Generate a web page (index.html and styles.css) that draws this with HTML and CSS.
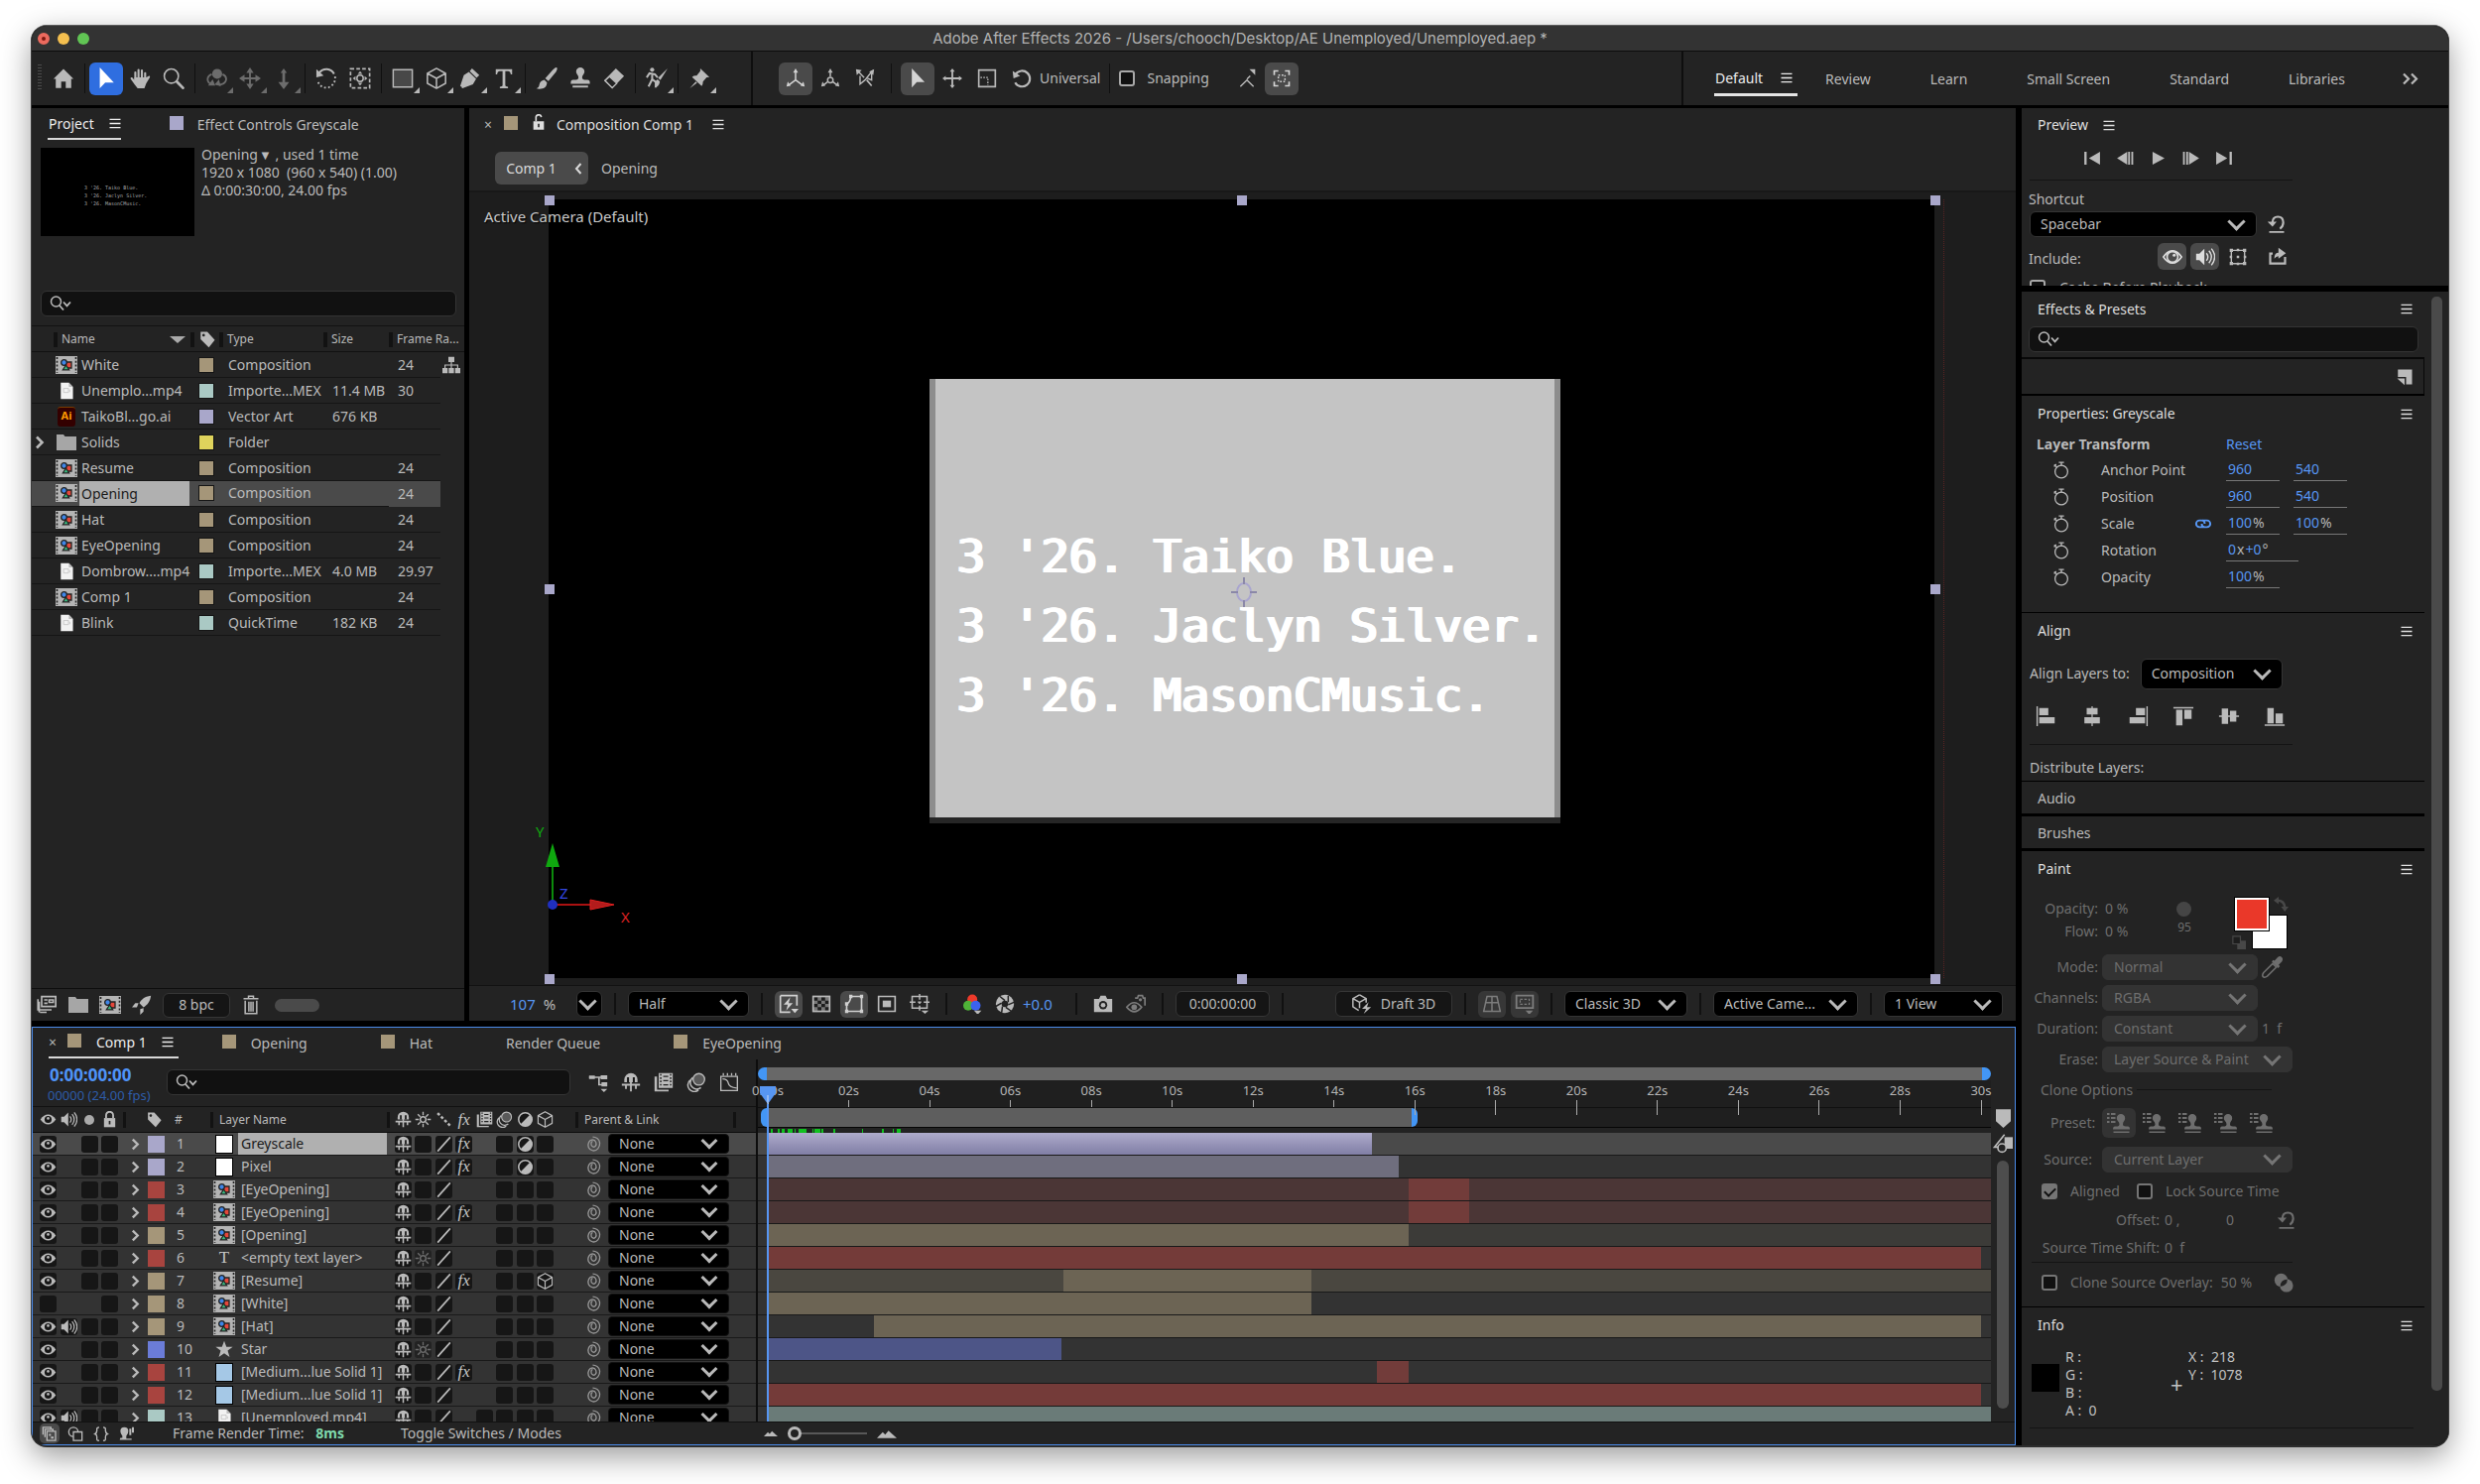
FILE: index.html
```html
<!DOCTYPE html>
<html lang="en">
<head>
<meta charset="utf-8">
<title>Adobe After Effects 2026</title>
<link rel="stylesheet" href="styles.css">
</head>
<body>
<svg class="sprite" aria-hidden="true">
  <symbol id="menu" viewBox="0 0 12 12"><path d="M0 1.5h12M0 6h12M0 10.5h12" stroke="currentColor" stroke-width="1.4"/></symbol>
  <symbol id="home" viewBox="0 0 24 24"><path d="M12 1.5 23 12.5h-2.5V22.5h-6v-7h-5v7h-6v-10H1z" fill="currentColor"/></symbol>
  <symbol id="arrow" viewBox="0 0 24 24"><path d="M5 0v23l6-6.5h9.5z" fill="currentColor"/></symbol>
  <symbol id="hand" viewBox="0 0 24 24"><path d="M7 14V5.5M10.5 12V2.8M14.2 12V3.2M17.8 13.5V6.2" stroke="currentColor" stroke-width="2.3" stroke-linecap="round" fill="none"/><path d="M6 11h13l2.500-1.500q2-.5 1.500 1.500l-4 6.500L17 23H9.500L6.500 19 1.800 12.500Q1.500 10.500 3.500 11L6 14z" fill="currentColor"/></symbol>
  <symbol id="loupe" viewBox="0 0 24 24"><circle cx="9.500" cy="9.500" r="7.800" fill="none" stroke="currentColor" stroke-width="1.700"/><path d="m15.500 15.500 6.800 7" stroke="currentColor" stroke-width="3" stroke-linecap="round"/></symbol>
  <symbol id="orbit" viewBox="0 0 24 24"><circle cx="13" cy="7" r="5.500" fill="currentColor"/><path d="M7 7.500C1 10 1 16 7 18.500M19 7.500c6 3 4.500 9-1 11-3 1-5 .5-7-.5" stroke="currentColor" stroke-width="2" fill="none"/><path d="m3 20 8 0-3-7zM15 13l-4 5 6 3z" fill="currentColor"/></symbol>
  <symbol id="pan" viewBox="0 0 24 24"><path d="M12 3v18M3 12h18" stroke="currentColor" stroke-width="2"/><path d="m12 0 4 6H8zM12 24l4-6H8zM0 12l6-4v8zM24 12l-6-4v8z" fill="currentColor"/></symbol>
  <symbol id="dolly" viewBox="0 0 24 24"><path d="M12 4v14" stroke="currentColor" stroke-width="3"/><path d="m12 1 3.500 5h-7zM12 24l6-8H6z" fill="currentColor"/></symbol>
  <symbol id="rotate" viewBox="0 0 24 24"><path d="M4 6C9 0 17 1 20.500 7" stroke="currentColor" stroke-width="2.200" fill="none"/><path d="M1 2v9l8-2z" fill="currentColor"/><path d="M21.500 10c1 5-2 10-7 12-5 1-10-1-12-7" stroke="currentColor" stroke-width="2" fill="none" stroke-dasharray="2 2.500"/></symbol>
  <symbol id="anchor" viewBox="0 0 24 24"><path d="M1.500 1.500h21v21h-21z" fill="none" stroke="currentColor" stroke-width="1.800" stroke-dasharray="4 2.400"/><circle cx="12" cy="12" r="3.500" fill="none" stroke="currentColor" stroke-width="1.600"/><path d="m12 4 2.500 3h-5zM12 20l2.500-3h-5zM4 12l3-2.500v5zM20 12l-3-2.500v5z" fill="currentColor"/></symbol>
  <symbol id="rect" viewBox="0 0 24 24"><path d="M1.500 2.500h21v19h-21z" fill="#484848" stroke="currentColor" stroke-width="1.600"/></symbol>
  <symbol id="cube" viewBox="0 0 24 24"><path d="m12 1 10 5.500v11L12 23 2 17.500v-11zM2 6.500l10 5.500 10-5.500M12 12v11" fill="none" stroke="currentColor" stroke-width="1.700" stroke-linejoin="round"/></symbol>
  <symbol id="pen" viewBox="0 0 24 24"><path d="M14 1 22 8.500l-3 3L11.500 4zM10.500 5l8 7.500-3.500 6L3.500 23 2.500 22l6-6.500a2 2 0 1 1 1 1L3.500 22 1 20.500l4-12z" fill="currentColor"/></symbol>
  <symbol id="type" viewBox="0 0 24 24"><path d="M3 2h18v5.500h-1.500Q19 4 16.500 4h-3v16q0 1.200 3 1.300V23h-9v-1.700q3-.1 3-1.300V4h-3Q5 4 4.500 7.500H3z" fill="currentColor"/></symbol>
  <symbol id="brush" viewBox="0 0 24 24"><path d="M23 0q1.500 1-.5 4.500L14 15l-3.500-3L19 2.500Q22-.5 23 0zM9.500 13.500l3 3Q12 23 6 23.500q-3 .5-5.500-.5 3-.5 3.500-4 .5-4.500 5.500-5.500z" fill="currentColor"/></symbol>
  <symbol id="stamp" viewBox="0 0 24 24"><path d="M12 0a4.600 4.600 0 0 1 4.600 4.600c0 2.500-2.600 4-2.600 6.400 0 1.500 1 2.500 3 2.500h3q2.500 0 2.500 3V18h-21v-1.500q0-3 2.500-3h3q3 0 3-2.500c0-2.400-2.600-3.900-2.600-6.400A4.600 4.600 0 0 1 12 0zM3.500 20h17v2h-17z" fill="currentColor"/></symbol>
  <symbol id="eraser" viewBox="0 0 24 24"><path d="M14 1 23 9.500 10 23 1 14.500z" fill="currentColor"/><path d="m7 10 8 7.500-5 4-7-7z" fill="#232323"/><path d="m7 10 8 7.500-5 5-8-8z" fill="none" stroke="currentColor" stroke-width="1.400"/></symbol>
  <symbol id="roto" viewBox="0 0 24 24"><circle cx="7" cy="2.500" r="2.300" fill="currentColor"/><path d="M1 11l3-4.500 6 1L13 11M7 7v6l-4 8M7 13l4 3v6" fill="none" stroke="currentColor" stroke-width="2.200"/><path d="M24 1 16 14l-2.500-2.500zM13 13l2.500 2.500q-1 6-6 6.500 2-2 1-4 0-4 2.500-5z" fill="currentColor"/></symbol>
  <symbol id="pin" viewBox="0 0 24 24"><path d="m13 1 10 9.500-3 .5-4 4.500q0 3.500-1.500 5L4 10.500Q6 8.500 9 9l4-5zM8 15.500l1.500 1.500L1.500 23z" fill="currentColor"/></symbol>
  <symbol id="axes" viewBox="0 0 24 24"><path d="M12 4v10l-8 6M12 14l8 6" fill="none" stroke="currentColor" stroke-width="1.800"/><path d="m12 0 3 5H9zM1 22l1.500-6L6 21zM23 22l-1.500-6L18 21z" fill="currentColor"/></symbol>
  <symbol id="axes2" viewBox="0 0 24 24"><path d="M12 4v6M9 16l-5 4M15 16l5 4" fill="none" stroke="currentColor" stroke-width="1.800"/><circle cx="12" cy="14" r="3.300" fill="none" stroke="currentColor" stroke-width="1.800"/><path d="m12 0 3 5H9zM1 22l1.500-6L6 21zM23 22l-1.500-6L18 21z" fill="currentColor"/></symbol>
  <symbol id="axes3" viewBox="0 0 24 24"><path d="m4 4 7 7M6 9v10l6-5 8-10v10l-5-2" fill="none" stroke="currentColor" stroke-width="1.700"/><path d="m1 1 7 1-6 6zM23 1l-1 7-5-4z" fill="currentColor"/><path d="m14 14 6 7" stroke="currentColor" stroke-width="2"/></symbol>
  <symbol id="move" viewBox="0 0 24 24"><path d="M12 2v20M2 12h20" stroke="currentColor" stroke-width="2.200"/><path d="m12 0 3 4H9zM12 24l3-4H9zM0 12l4-3v6zM24 12l-4-3v6z" fill="currentColor"/></symbol>
  <symbol id="scale" viewBox="0 0 24 24"><path d="M2 2h20v20H2z" fill="none" stroke="currentColor" stroke-width="2"/><path d="M4 11h9v9" fill="none" stroke="currentColor" stroke-width="1.600" stroke-dasharray="2 1.500"/></symbol>
  <symbol id="undo" viewBox="0 0 24 24"><path d="M4.500 7A9.500 9.500 0 1 1 4 17" fill="none" stroke="currentColor" stroke-width="2.600"/><path d="M1 3l1 9 8-3z" fill="currentColor"/></symbol>
  <symbol id="snap" viewBox="0 0 24 24"><path d="m4 22 8-8 8 8M12 13l4-4" fill="none" stroke="currentColor" stroke-width="1.700"/><path d="M22 1v7l-7-7z" fill="currentColor"/></symbol>
  <symbol id="snapbox" viewBox="0 0 24 24"><path d="M3 8V3h5M16 3h5v5M21 16v5h-5M8 21H3v-5" fill="none" stroke="currentColor" stroke-width="2"/><path d="M8 8h8v8H8z" fill="none" stroke="currentColor" stroke-width="1.800" stroke-dasharray="2 2"/></symbol>
  <symbol id="lock" viewBox="0 0 24 24"><path d="M7 10V6a5 5 0 0 1 10 0v4" fill="none" stroke="currentColor" stroke-width="2.600"/><path d="M4 10h16v13H4z" fill="currentColor"/><path d="M12 14v5" stroke="#232323" stroke-width="2.400"/></symbol>
  <symbol id="unlock" viewBox="0 0 24 24"><path d="M8 10V5a4 4 0 0 1 8-1" fill="none" stroke="currentColor" stroke-width="2.400"/><path d="M4 10h16v13H4z" fill="currentColor"/><path d="M12 14v5" stroke="#232323" stroke-width="2.400"/></symbol>
  <symbol id="searchv" viewBox="0 0 22 16"><circle cx="6.500" cy="6" r="5" fill="none" stroke="currentColor" stroke-width="1.500"/><path d="m10 10 4 4.500" stroke="currentColor" stroke-width="1.800"/><path d="m14 6.500 3.500 3.800L21 6.500" fill="none" stroke="currentColor" stroke-width="1.800"/></symbol>
  <symbol id="tag" viewBox="0 0 24 24"><path d="M3 2h9l10 11-8 10L3 12z" fill="currentColor"/><circle cx="7" cy="6.500" r="1.800" fill="#232323"/></symbol>
  <symbol id="comp" viewBox="0 0 22 18"><path d="M0 0h22v18H0z" fill="#b4b4b4"/><path d="M1.500 1v16M20.500 1v16" stroke="#222" stroke-width="1.600" stroke-dasharray="2 1.800"/><path d="M10 6h6v6h-6z" fill="#e5483b" stroke="#222" stroke-width="1.300"/><circle cx="8.500" cy="6.500" r="2.800" fill="#3f86e8" stroke="#222" stroke-width="1.300"/><path d="m10.500 9 3.200 4.800H7.300z" fill="#39b77c" stroke="#222" stroke-width="1.200"/></symbol>
  <symbol id="file" viewBox="0 0 22 22"><path d="M4 1h10l5 5v15H4z" fill="#f2f2f2"/><path d="M14 1v5h5z" fill="#bbb"/><path d="M7.500 8h6v5h-6zM15 9.500v3" fill="none" stroke="#c3c3c3"/></symbol>
  <symbol id="folder" viewBox="0 0 22 18"><path d="M1 1h7l1.500 2H21v14H1z" fill="#a6a6a6"/></symbol>
  <symbol id="star" viewBox="0 0 24 24"><path d="m12 1 3 8h8.500l-6.800 5 2.600 8.500L12 17.500 4.700 22.500 7.300 14 .5 9H9z" fill="currentColor"/></symbol>
  <symbol id="flow" viewBox="0 0 24 24"><path d="M8 1h8v7H8zM0 16h7v7H0zM8.500 16h7v7h-7zM17 16h7v7h-7z" fill="currentColor"/><path d="M12 8v8M3.500 16v-4h17v4" fill="none" stroke="currentColor" stroke-width="1.600"/></symbol>
  <symbol id="interp" viewBox="0 0 24 24"><path d="M6 2h17v12H6z" fill="none" stroke="currentColor" stroke-width="2"/><path d="M9 6h4M9 10h4M15 6h5v3h-5zM1.500 5v13H18M4 21h8M3 8v13" stroke="currentColor" stroke-width="2" fill="none"/></symbol>
  <symbol id="rocket" viewBox="0 0 24 24"><path d="M23 1c-8 1-12 5-14 9l5 5c5-3 8-7 9-14zM8 10H4l-4 5h6zM14 16v4l-4 4v-7z" fill="currentColor"/></symbol>
  <symbol id="trash" viewBox="0 0 24 24"><path d="M3 4.500h18M9 4V1.500h6V4M5 7v15.500h14V7M9.500 8v12M12 8v12M14.500 8v12" fill="none" stroke="currentColor" stroke-width="1.800"/></symbol>
  <symbol id="eye" viewBox="0 0 24 24"><path d="M1 12Q6 5 12 5t11 7q-5 7-11 7T1 12z" fill="currentColor"/><circle cx="12" cy="12" r="5" fill="#161616"/><circle cx="12" cy="10.500" r="1.900" fill="currentColor"/></symbol>
  <symbol id="audio" viewBox="0 0 24 24"><path d="M1 8h4l6-6v20l-6-6H1z" fill="currentColor"/><path d="M13.500 7.500q3.500 4.500 0 9M16.500 4.500q6 7.500 0 15M19.500 2q8 10 0 20" fill="none" stroke="currentColor" stroke-width="1.700"/></symbol>
  <symbol id="shy" viewBox="0 0 24 24"><path d="M4 12V9a8 8 0 0 1 16 0v3z" fill="currentColor"/><path d="M8.500 6v6M15.500 6v6" stroke="#161616" stroke-width="2.400"/><path d="M12 11v12M1 15h22M6 16v4M18 16v4" stroke="currentColor" stroke-width="2.200"/></symbol>
  <symbol id="sun" viewBox="0 0 24 24"><circle cx="12" cy="12" r="4" fill="none" stroke="currentColor" stroke-width="2"/><path d="M12 1v5M12 18v5M1 12h5M18 12h5M4.500 4.500 8 8M16 16l3.500 3.500M19.500 4.500 16 8M8 16l-3.500 3.500" stroke="currentColor" stroke-width="1.900"/></symbol>
  <symbol id="dash" viewBox="0 0 24 24"><path d="m3 3 18 18" stroke="currentColor" stroke-width="3.500" stroke-dasharray="4 3"/></symbol>
  <symbol id="slash" viewBox="0 0 24 24"><path d="M3 22 21 2" stroke="currentColor" stroke-width="2.400"/></symbol>
  <symbol id="film" viewBox="0 0 24 24"><path d="M6 1h17v18H6zM1 5h3v16h14v2H1z" fill="currentColor"/><path d="M8.500 2v16M20.500 2v16" stroke="#232323" stroke-width="1.800" stroke-dasharray="2 2"/><path d="M11.500 5h6M11.500 10h6M11.500 15h6" stroke="#232323" stroke-width="1.500"/></symbol>
  <symbol id="blur" viewBox="0 0 24 24"><circle cx="15" cy="8.500" r="7" fill="#5a5a5a" stroke="currentColor" stroke-width="1.600"/><path d="M7.500 6.500a7.500 7.500 0 0 0 10 12M4.500 9.500a7.500 7.500 0 0 0 10 12" fill="none" stroke="currentColor" stroke-width="1.800"/></symbol>
  <symbol id="adj" viewBox="0 0 24 24"><circle cx="12" cy="12" r="9.500" fill="#161616" stroke="currentColor" stroke-width="2.200"/><path d="M19 5A9.500 9.500 0 0 1 5 19z" fill="currentColor"/></symbol>
  <symbol id="spiral" viewBox="0 0 24 24"><path d="M12 8c2.500 0 3.500 6 0 7.500S6 13 7.500 9 15 4 17.500 9s.5 11-5.500 12S1.500 16 2 10 8 1.500 12 1.500" fill="none" stroke="currentColor" stroke-width="1.900" transform="matrix(-1 0 0 1 24 0)"/></symbol>
  <symbol id="twirl" viewBox="0 0 10 14"><path d="m2 1.500 5.500 5.500L2 12.500" fill="none" stroke="currentColor" stroke-width="2.600"/></symbol>
  <symbol id="bolt" viewBox="0 0 24 24"><path d="M2 2h20v12M14 22H2V2" fill="none" stroke="currentColor" stroke-width="2"/><path d="m14 4-8 9h5l-2 7 8-9h-5z" fill="currentColor"/><path d="M15 18h9l-4.500 5z" fill="currentColor"/></symbol>
  <symbol id="checker" viewBox="0 0 24 24"><path d="M1 2h22v20H1z" fill="#777"/><path d="M3 4h4.500v4H3zM12 4h4.500v4H12zM7.500 8H12v4H7.500zM16.500 8H21v4h-4.500zM3 12h4.500v4H3zM12 12h4.500v4H12zM7.500 16H12v4H7.500zM16.500 16H21v4h-4.500z" fill="#1c1c1c"/><path d="M2 3h20v18H2z" fill="none" stroke="currentColor" stroke-width="1.800"/></symbol>
  <symbol id="mask" viewBox="0 0 24 24"><path d="M3 21V12q4-1 5-9h13v18z" fill="none" stroke="currentColor" stroke-width="2"/><path d="M1 19h4v4H1zM19 19h4v4h-4zM19 1h4v4h-4zM6 1h4v4H6zM1 10h4v4H1z" fill="currentColor"/></symbol>
  <symbol id="roi" viewBox="0 0 24 24"><path d="M2 3h20v18H2z" fill="none" stroke="currentColor" stroke-width="2"/><path d="M7 8h10v8H7z" fill="currentColor"/></symbol>
  <symbol id="guides" viewBox="0 0 24 24"><path d="M3 3h18v14H3zM12 0v7M12 10v2M12 14v6M0 10h7M10 10h4M17 10h7" fill="none" stroke="currentColor" stroke-width="1.800"/><path d="M14 20h9l-4.500 4z" fill="currentColor"/></symbol>
  <symbol id="rgb" viewBox="0 0 24 24"><circle cx="11" cy="6.500" r="6" fill="#ee3a2a"/><circle cx="6" cy="14" r="6" fill="#4fb238"/><circle cx="15" cy="14" r="6" fill="#3c62ee"/><path d="M13 20h9l-4.500 5z" fill="currentColor"/></symbol>
  <symbol id="aperture" viewBox="0 0 24 24"><circle cx="12" cy="12" r="11" fill="currentColor"/><circle cx="12" cy="12" r="4" fill="#232323"/><path d="M12 8 6 3M16 10l0-8M16 13l7-3M13 16l7 5M9 15l-1 8M8 11l-7 4" stroke="#232323" stroke-width="1.800"/></symbol>
  <symbol id="camera" viewBox="0 0 24 24"><path d="M1 6h6l2-4h6l2 4h6v16H1z" fill="currentColor"/><circle cx="12" cy="13.500" r="5" fill="#232323"/><circle cx="12" cy="13.500" r="2.800" fill="currentColor"/></symbol>
  <symbol id="camview" viewBox="0 0 24 24"><path d="M1 16q9-11 18 0-9 11-18 0z" fill="none" stroke="currentColor" stroke-width="2"/><circle cx="10" cy="16" r="3.500" fill="currentColor"/><path d="M11 5h3l1-3h5l1 3h2v9" fill="none" stroke="currentColor" stroke-width="2"/><circle cx="17.500" cy="7" r="2" fill="currentColor"/></symbol>
  <symbol id="draft" viewBox="0 0 24 24"><path d="m9 1 8 4.500v5M8 20l-7-4.500v-10L9 1M1 5.500 9 10l8-4.500M9 10v7" fill="none" stroke="currentColor" stroke-width="1.800"/><path d="m20 10-8 8h5l-3 6 9-8h-5z" fill="currentColor"/></symbol>
  <symbol id="ground" viewBox="0 0 24 24"><path d="M6 3h12l4 18H2zM12 3v18M4.500 10.500h15" fill="none" stroke="currentColor" stroke-width="1.800"/></symbol>
  <symbol id="extents" viewBox="0 0 24 24"><path d="M2 2h20v15H2z" fill="none" stroke="currentColor" stroke-width="2.200"/><path d="M6.500 6.500h11v6h-11z" fill="none" stroke="currentColor" stroke-width="1.500" stroke-dasharray="3 2"/><path d="M13 20h9l-4.500 5z" fill="currentColor"/></symbol>
  <symbol id="t-first" viewBox="0 0 18 14"><path d="M0 0h2.500v14H0zM17 0v14L5 7z" fill="currentColor"/></symbol>
  <symbol id="t-prev" viewBox="0 0 18 14"><path d="M11 0v14L0 7zM12 0h2v14h-2zM15.500 0h2v14h-2z" fill="currentColor"/></symbol>
  <symbol id="t-play" viewBox="0 0 18 14"><path d="M3 0v14l13-7z" fill="currentColor"/></symbol>
  <symbol id="t-next" viewBox="0 0 18 14"><path d="M7 0v14l11-7zM.5 0h2v14h-2zM4 0h2v14H4z" fill="currentColor"/></symbol>
  <symbol id="t-last" viewBox="0 0 18 14"><path d="M15.500 0H18v14h-2.500zM1 0v14l12-7z" fill="currentColor"/></symbol>
  <symbol id="reset" viewBox="0 0 24 24"><path d="M7 10q0-7 6.500-7T20 10q0 5-4 7.500" fill="none" stroke="currentColor" stroke-width="2.600"/><path d="M1 9h11l-5 6zM3 20.500h18v2H3z" fill="currentColor"/></symbol>
  <symbol id="eyebig" viewBox="0 0 24 24"><path d="M1 12Q6 4.500 12 4.500T23 12q-5 7.500-11 7.500T1 12z" fill="none" stroke="currentColor" stroke-width="2"/><circle cx="12" cy="12" r="6.500" fill="none" stroke="currentColor" stroke-width="2"/><circle cx="14" cy="10" r="1.800" fill="currentColor"/></symbol>
  <symbol id="bounds" viewBox="0 0 24 24"><path d="M4 4h16v16H4z" fill="none" stroke="currentColor" stroke-width="1.700"/><path d="M2 2h4v4H2zM18 2h4v4h-4zM2 18h4v4H2zM18 18h4v4h-4zM10.500 10.500h3v3h-3zM10.500 2h3v3h-3zM10.500 19h3v3h-3zM2 10.500h3v3H2zM19 10.500h3v3h-3z" fill="currentColor"/></symbol>
  <symbol id="export" viewBox="0 0 24 24"><path d="M6 8H3v12h18v-8" fill="none" stroke="currentColor" stroke-width="2.600"/><path d="M8 14q0-7 5-7V1l9 6.500L13 14v-3q-3 0-5 3z" fill="currentColor"/></symbol>
  <symbol id="newitem" viewBox="0 0 24 24"><path d="M3 2h19v20H14V12H3z" fill="currentColor"/><path d="M2 14h10v9z" fill="currentColor"/></symbol>
  <symbol id="watch" viewBox="0 0 24 24"><circle cx="12" cy="14" r="8.500" fill="none" stroke="currentColor" stroke-width="1.700"/><path d="M8.500 1.500h7M12 2v4M2.500 4.500 6 8M2 7l3-3" stroke="currentColor" stroke-width="1.800"/></symbol>
  <symbol id="link" viewBox="0 0 24 14"><path d="M13 11.500H7A4.500 4.500 0 0 1 7 2.500h3q4 0 4 4.500M11 2.500h6a4.500 4.500 0 0 1 0 9h-3q-4 0-4-4.500" fill="none" stroke="currentColor" stroke-width="2.600"/></symbol>
  <symbol id="al" viewBox="0 0 24 24"><path d="M1 1h1.500v22H1zM4 3h10v8H4zM4 13h17v7H4z" fill="currentColor"/></symbol>
  <symbol id="ac" viewBox="0 0 24 24"><path d="M11.300 1h1.400v22h-1.400zM6 3h12v7H6zM3.500 13h17v7h-17z" fill="currentColor"/></symbol>
  <symbol id="ar" viewBox="0 0 24 24"><path d="M21.500 1H23v22h-1.500zM10 3h10v8H10zM3 13h17v7H3z" fill="currentColor"/></symbol>
  <symbol id="at" viewBox="0 0 24 24"><path d="M1 2h22v1.500H1zM4 5h7v17H4zM13 5h8v10h-8z" fill="currentColor"/></symbol>
  <symbol id="am" viewBox="0 0 24 24"><path d="M1 11.300h22v1.400H1zM4 3.500h7v17H4zM13 6h7v12h-7z" fill="currentColor"/></symbol>
  <symbol id="ab" viewBox="0 0 24 24"><path d="M1 21h22v1.500H1zM4 3h7v17H4zM13 9h8v11h-8z" fill="currentColor"/></symbol>
  <symbol id="dropper" viewBox="0 0 24 24"><path d="m12 8 4 4L6 22q-3 2-4.500.5T2 18z" fill="none" stroke="currentColor" stroke-width="1.700"/><path d="m11 6 7 7 2-2-1.500-1.500L22 6q2-3 0-5t-5 .5L14 5l-1.500-1z" fill="currentColor"/></symbol>
  <symbol id="preset" viewBox="0 0 24 22"><path d="M14 2a4.200 4.200 0 0 1 4.200 4.200c0 2.500-2.200 3.500-2.200 6 0 1.300 1 2.300 3 2.300h2q2 0 2 3H6q0-3 2-3h1.500q3 0 3-2.300c0-2.500-2.700-3.500-2.700-6A4.200 4.200 0 0 1 14 2zM6.500 19.500h16V21h-16z" fill="currentColor"/><path d="M0 2h2.500M0 6h2.500M0 10h2.500M4 2h4.500M4 6h4.500M4 10h4.500" stroke="currentColor" stroke-width="1.800"/></symbol>
  <symbol id="overlay" viewBox="0 0 24 24"><circle cx="9" cy="9" r="8" fill="currentColor"/><circle cx="15.500" cy="15.500" r="8" fill="currentColor"/><path d="M8 16.500A8 8 0 0 1 16.500 8a8 8 0 0 1-8.500 8.500z" fill="#232323"/></symbol>
  <symbol id="swap" viewBox="0 0 24 24"><path d="M6 6q11 0 12 11" fill="none" stroke="currentColor" stroke-width="4"/><path d="m0 6 8-6v12zM18 24l-6-8h12z" fill="currentColor"/></symbol>
  <symbol id="mini" viewBox="0 0 24 24"><path d="M9 9h15v15H9z" fill="currentColor"/><path d="M1.500 1.500h13v13h-13z" fill="#1d1d1d" stroke="currentColor" stroke-width="2"/></symbol>
  <symbol id="tree" viewBox="0 0 24 24"><path d="M1 6h8M9 6h7M13 6v9h5" fill="none" stroke="currentColor" stroke-width="2"/><path d="M1 4h7v4H1zM15 3.500h8v5h-8zM16 12h7v5h-7zM15 20h8l-4 4z" fill="currentColor"/></symbol>
  <symbol id="graph" viewBox="0 0 24 24"><path d="M2 5h20v17H2zM4 8q6 0 7 5t10 6M5 1v3M10 1v3M15 1v3M20 1v3" fill="none" stroke="currentColor" stroke-width="1.600"/></symbol>
  <symbol id="stack" viewBox="0 0 24 24"><path d="M8 8h13v14H8zM5 17V5h12v3M2 13V2h12v3" fill="none" stroke="currentColor" stroke-width="2"/><path d="M11 12h3v3h-3zM14 16h4v3h-4z" fill="currentColor"/></symbol>
  <symbol id="modes" viewBox="0 0 24 24"><circle cx="9" cy="9" r="7" fill="none" stroke="currentColor" stroke-width="2"/><path d="M9 9h13v13H9z" fill="#232323" stroke="currentColor" stroke-width="2"/></symbol>
  <symbol id="braces" viewBox="0 0 24 24"><path d="M9 2Q5 2 5.500 6T2.500 12Q6 13 5.500 18T9 22M15 2q4 0 3.500 4t3 6q-3.500 1-3 6T15 22" fill="none" stroke="currentColor" stroke-width="2"/></symbol>
  <symbol id="render" viewBox="0 0 24 24"><path d="M2 8a6 6 0 0 1 12 0q0 4-3 7v4h8v2H1l1-3h3v-3Q2 12 2 8z" fill="currentColor"/><path d="M17 14V4M21 10V2" stroke="currentColor" stroke-width="3"/></symbol>
  <symbol id="marker" viewBox="0 0 16 20"><path d="M0 0h16v13l-8 7-8-7z" fill="currentColor"/></symbol>
  <symbol id="compmark" viewBox="0 0 24 24"><path d="M14 4h10v14H14z" fill="currentColor"/><path d="M14 1 2 16h5" fill="none" stroke="currentColor" stroke-width="2"/><circle cx="11" cy="17" r="5" fill="#232323" stroke="currentColor" stroke-width="2"/></symbol>
  <symbol id="mtn" viewBox="0 0 24 10"><path d="m0 10 7-7 3 3 4-5 10 9z" fill="currentColor"/></symbol>
</svg>

<div class="window">
  <header class="titlebar">
    <span class="light red"></span><span class="light yellow"></span><span class="light green"></span>
    <h1>Adobe After Effects 2026 - /Users/chooch/Desktop/AE Unemployed/Unemployed.aep *</h1>
  </header>

  <div class="toolbar">
    <span class="grip"></span>
    <div class="tools">
      <button aria-label="Home"><svg><use href="#home"/></svg></button><i></i>
      <button class="on blue" aria-label="Selection"><svg><use href="#arrow"/></svg></button>
      <button aria-label="Hand"><svg><use href="#hand"/></svg></button>
      <button aria-label="Zoom"><svg><use href="#loupe"/></svg></button><i></i>
      <button class="dim more" aria-label="Orbit"><svg><use href="#orbit"/></svg></button>
      <button class="dim more" aria-label="Pan"><svg><use href="#pan"/></svg></button>
      <button class="dim more" aria-label="Dolly"><svg><use href="#dolly"/></svg></button><i></i>
      <button aria-label="Rotate"><svg><use href="#rotate"/></svg></button>
      <button aria-label="Pan behind"><svg><use href="#anchor"/></svg></button><i></i>
      <button class="more" aria-label="Rectangle"><svg><use href="#rect"/></svg></button>
      <button class="more" aria-label="3D shape"><svg><use href="#cube"/></svg></button>
      <button class="more" aria-label="Pen"><svg><use href="#pen"/></svg></button>
      <button class="more" aria-label="Type"><svg><use href="#type"/></svg></button><i></i>
      <button aria-label="Brush"><svg><use href="#brush"/></svg></button>
      <button aria-label="Clone stamp"><svg><use href="#stamp"/></svg></button>
      <button aria-label="Eraser"><svg><use href="#eraser"/></svg></button><i></i>
      <button class="more" aria-label="Roto brush"><svg><use href="#roto"/></svg></button><i></i>
      <button class="more" aria-label="Puppet pin"><svg><use href="#pin"/></svg></button>
    </div>
    <div class="tools axis">
      <button class="on" aria-label="Local axis"><svg><use href="#axes"/></svg></button>
      <button aria-label="World axis"><svg><use href="#axes2"/></svg></button>
      <button aria-label="View axis"><svg><use href="#axes3"/></svg></button><i></i>
      <button class="on" aria-label="Universal gizmo"><svg><use href="#arrow"/></svg></button>
      <button aria-label="Move gizmo"><svg><use href="#move"/></svg></button>
      <button aria-label="Scale gizmo"><svg><use href="#scale"/></svg></button>
      <button aria-label="Rotate gizmo"><svg><use href="#undo"/></svg></button>
      <span>Universal</span><i></i>
      <label class="snapping"><input type="checkbox">Snapping</label>
      <button aria-label="Snap edges"><svg><use href="#snap"/></svg></button>
      <button class="on" aria-label="Snap features"><svg><use href="#snapbox"/></svg></button>
    </div>
    <nav class="spaces">
      <a class="current" href="#">Default <svg class="menu"><use href="#menu"/></svg></a>
      <a href="#">Review</a><a href="#">Learn</a><a href="#">Small Screen</a><a href="#">Standard</a><a href="#">Libraries</a>
      <a class="overflow" href="#" aria-label="More workspaces"><svg viewBox="0 0 16 12"><path d="m1 1 5 5-5 5M9 1l5 5-5 5" fill="none" stroke="currentColor" stroke-width="2.200"/></svg></a>
    </nav>
  </div>

  <main class="workspace">
    <div class="left">
      <div class="upper">
        <section class="panel project">
          <div class="tabs">
            <a class="tab current" href="#">Project <svg class="menu"><use href="#menu"/></svg></a>
            <a class="tab effects" href="#"><b class="sw lav"></b>Effect Controls Greyscale</a>
          </div>
          <div class="summary">
            <div class="thumb"><p>3 '26. Taiko Blue.</p><p>3 '26. Jaclyn Silver.</p><p>3 '26. MasonCMusic.</p></div>
            <div class="meta"><p>Opening<small>▼</small> , used 1 time</p><p>1920 x 1080&nbsp; (960 x 540) (1.00)</p><p>Δ 0:00:30:00, 24.00 fps</p></div>
          </div>
          <div class="search"><svg><use href="#searchv"/></svg><input type="text" aria-label="Search project"></div>
          <table class="items">
            <thead><tr><th></th><th class="bar">Name<span class="sort"></span></th><th class="bar tagcell"><svg><use href="#tag"/></svg></th><th class="bar">Type</th><th class="bar">Size</th><th class="bar">Frame Ra...</th></tr></thead>
            <tbody id="items"></tbody>
          </table>
          <div class="project-foot">
            <button aria-label="Interpret footage"><svg><use href="#interp"/></svg></button>
            <button aria-label="New folder"><svg><use href="#folder"/></svg></button>
            <button aria-label="New composition"><svg><use href="#comp"/></svg></button>
            <button aria-label="Project settings"><svg><use href="#rocket"/></svg></button>
            <button class="bpc">8 bpc</button>
            <button aria-label="Delete"><svg><use href="#trash"/></svg></button>
            <span class="pill"></span>
          </div>
        </section>

        <section class="panel viewer-panel">
          <div class="tabs">
            <a class="tab open" href="#"><em>×</em><b class="sw tan"></b><svg class="lock"><use href="#unlock"/></svg>Composition Comp 1<svg class="menu"><use href="#menu"/></svg></a>
          </div>
          <div class="crumbs"><button>Comp 1<svg viewBox="0 0 8 12"><path d="M6.500 1 2 6l4.500 5" fill="none" stroke="currentColor" stroke-width="2"/></svg></button><a href="#">Opening</a></div>
          <div class="viewer">
            <div class="frame">
              <div class="card"><p>3 '26. Taiko Blue.</p><p>3 '26. Jaclyn Silver.</p><p>3 '26. MasonCMusic.</p></div>
              <svg class="center" viewBox="0 0 26 30"><ellipse cx="13" cy="15" rx="7" ry="9" fill="none" stroke="#a9a5cf" stroke-width="2"/><path d="M13 0v7M13 23v7M0 15h7M19 15h7" stroke="#8b88a8" stroke-width="2"/></svg>
              <svg class="gizmo" viewBox="0 0 90 90"><path d="M15 70V28" stroke="#0c8a0c" stroke-width="2"/><path d="m15 8 7 24H8z" fill="#0fa80f"/><path d="M15 70h42" stroke="#a11" stroke-width="2"/><path d="m77 70-24 5V65z" fill="#b31c1c" stroke="#e02020"/><circle cx="15" cy="70" r="5" fill="#1f2fc0"/></svg>
              <span class="ax y">Y</span><span class="ax z">Z</span><span class="ax x">X</span>
              <b class="h tl"></b><b class="h tc"></b><b class="h tr"></b><b class="h ml"></b><b class="h mr"></b><b class="h bl"></b><b class="h bc"></b><b class="h br"></b>
              <span class="camera-name">Active Camera (Default)</span>
              <span class="bound"></span>
            </div>
          </div>
          <div class="viewer-foot">
            <span class="zoomv"><a href="#">107</a> %</span>
            <span class="pick zoomsel"><select aria-label="Magnification"><option></option></select></span><i></i>
            <span class="pick half"><select aria-label="Resolution"><option>Half</option></select></span><i></i>
            <span class="grp">
              <button class="on" aria-label="Fast previews"><svg><use href="#bolt"/></svg></button>
              <button aria-label="Transparency grid"><svg><use href="#checker"/></svg></button>
              <button class="on" aria-label="Mask visibility"><svg><use href="#mask"/></svg></button>
              <button aria-label="Region of interest"><svg><use href="#roi"/></svg></button>
              <button aria-label="Guides"><svg><use href="#guides"/></svg></button>
            </span><i></i>
            <span class="grp color">
              <button aria-label="Channels"><svg><use href="#rgb"/></svg></button>
              <button aria-label="Exposure reset"><svg><use href="#aperture"/></svg></button>
              <a href="#">+0.0</a>
            </span><i></i>
            <span class="grp">
              <button aria-label="Snapshot"><svg><use href="#camera"/></svg></button>
              <button class="dim" aria-label="Show snapshot"><svg><use href="#camview"/></svg></button>
            </span><i></i>
            <button class="box time">0:00:00:00</button><i class="far"></i>
            <button class="box draft"><svg><use href="#draft"/></svg>Draft 3D</button><i></i>
            <span class="grp">
              <button class="off" aria-label="Ground plane"><svg><use href="#ground"/></svg></button>
              <button class="off" aria-label="Extended viewer"><svg><use href="#extents"/></svg></button>
            </span><i></i>
            <span class="pick classic"><select aria-label="Renderer"><option>Classic 3D</option></select></span><i></i>
            <span class="pick cam"><select aria-label="3D view"><option>Active Came...</option></select></span><i></i>
            <span class="pick views"><select aria-label="View layout"><option>1 View</option></select></span>
          </div>
        </section>
      </div>

      <section class="timeline">
        <div class="tl-tabs">
          <a class="tab current" href="#"><em>×</em><b class="sw tan"></b>Comp 1<svg class="menu"><use href="#menu"/></svg></a>
          <a class="tab" href="#"><b class="sw tan"></b>Opening</a>
          <a class="tab" href="#"><b class="sw tan"></b>Hat</a>
          <a class="tab" href="#">Render Queue</a>
          <a class="tab" href="#"><b class="sw tan"></b>EyeOpening</a>
        </div>
        <div class="tl-body">
          <div class="layers">
            <div class="tl-ctrl">
              <div class="clock"><strong>0:00:00:00</strong><span>00000 (24.00 fps)</span></div>
              <div class="search"><svg><use href="#searchv"/></svg><input type="text" aria-label="Search layers"></div>
              <div class="toggles">
                <button aria-label="Mini flowchart"><svg><use href="#tree"/></svg></button>
                <button aria-label="Hide shy layers"><svg><use href="#shy"/></svg></button>
                <button aria-label="Frame blending"><svg><use href="#film"/></svg></button>
                <button aria-label="Motion blur"><svg><use href="#blur"/></svg></button>
                <button aria-label="Graph editor"><svg><use href="#graph"/></svg></button>
              </div>
            </div>
            <div class="row head">
              <span><svg><use href="#eye"/></svg></span><span><svg><use href="#audio"/></svg></span><span class="dot"></span><span><svg><use href="#lock"/></svg></span>
              <span class="bar"></span><span class="tagh"><svg><use href="#tag"/></svg></span><span class="num">#</span><span class="bar lname">Layer Name</span>
              <span class="switches bar"><svg><use href="#shy"/></svg><svg><use href="#sun"/></svg><svg><use href="#dash"/></svg><em class="fx">fx</em><svg><use href="#film"/></svg><svg><use href="#blur"/></svg><svg><use href="#adj"/></svg><svg><use href="#cube"/></svg></span>
              <span class="bar plink">Parent &amp; Link</span><span class="bar endbar"></span>
            </div>
            <div class="rows" id="layers"></div>
          </div>
          <div class="tracks">
            <div class="nav"><span></span></div>
            <div class="ruler" id="ruler"></div>
            <div class="work"><span></span></div>
            <div class="cache" id="cache"></div>
            <div class="lanes" id="lanes"></div>
            <div class="playhead"><svg viewBox="0 0 16 18"><path d="M0 0h16v7L8 18 0 7z" fill="#5796f2"/><path d="M8 9v9" stroke="#cfdcf2"/></svg></div>
          </div>
          <div class="gutter"><svg class="mk"><use href="#marker"/></svg><svg class="cm"><use href="#compmark"/></svg><span class="thumbbar"></span></div>
        </div>
        <footer class="tl-foot">
          <button class="on" aria-label="Layer switches pane"><svg><use href="#stack"/></svg></button>
          <button aria-label="Transfer controls pane"><svg><use href="#modes"/></svg></button>
          <button aria-label="In and out pane"><svg><use href="#braces"/></svg></button>
          <button aria-label="Render time pane"><svg><use href="#render"/></svg></button>
          <span class="frt">Frame Render Time: <strong>8ms</strong></span>
          <button class="modes">Toggle Switches / Modes</button>
          <span class="zoomer"><svg class="m1"><use href="#mtn"/></svg><input type="range" min="0" max="100" value="0" aria-label="Timeline zoom"><svg class="m2"><use href="#mtn"/></svg></span>
        </footer>
      </section>
    </div>

    <aside class="right">
      <section class="preview">
        <h2>Preview <svg class="menu"><use href="#menu"/></svg></h2>
        <div class="transport">
          <button aria-label="First frame"><svg><use href="#t-first"/></svg></button><button aria-label="Previous frame"><svg><use href="#t-prev"/></svg></button><button aria-label="Play"><svg><use href="#t-play"/></svg></button><button aria-label="Next frame"><svg><use href="#t-next"/></svg></button><button aria-label="Last frame"><svg><use href="#t-last"/></svg></button>
        </div>
        <label class="cap" for="shortcut">Shortcut</label>
        <div class="short"><span class="pick"><select id="shortcut"><option>Spacebar</option></select></span><svg><use href="#reset"/></svg></div>
        <div class="include"><span>Include:</span><button class="on" aria-label="Include video"><svg><use href="#eyebig"/></svg></button><button class="on" aria-label="Include audio"><svg><use href="#audio"/></svg></button><button aria-label="Include overlays"><svg><use href="#bounds"/></svg></button><button class="exp" aria-label="Layer controls"><svg><use href="#export"/></svg></button></div>
        <label class="cached"><input type="checkbox">Cache Before Playback</label>
      </section>

      <div class="dock">
        <div class="stack">
          <section class="fxp">
            <h2>Effects &amp; Presets <svg class="menu"><use href="#menu"/></svg></h2>
            <div class="search"><svg><use href="#searchv"/></svg><input type="text" aria-label="Search effects"></div>
            <div class="empty"><svg><use href="#newitem"/></svg></div>
          </section>
          <section class="props">
            <h2>Properties: Greyscale <svg class="menu"><use href="#menu"/></svg></h2>
            <div class="lt"><strong>Layer Transform</strong><a href="#">Reset</a></div>
            <div class="prop"><svg><use href="#watch"/></svg><span>Anchor Point</span><u></u><a href="#">960</a><a href="#">540</a></div>
            <div class="prop"><svg><use href="#watch"/></svg><span>Position</span><u></u><a href="#">960</a><a href="#">540</a></div>
            <div class="prop"><svg><use href="#watch"/></svg><span>Scale</span><svg class="chain"><use href="#link"/></svg><a href="#">100<s>%</s></a><a href="#">100<s>%</s></a></div>
            <div class="prop"><svg><use href="#watch"/></svg><span>Rotation</span><u></u><a class="wide" href="#">0<s>x</s>+0<s>°</s></a></div>
            <div class="prop"><svg><use href="#watch"/></svg><span>Opacity</span><u></u><a href="#">100<s>%</s></a></div>
          </section>
          <section class="align">
            <h2>Align <svg class="menu"><use href="#menu"/></svg></h2>
            <div class="alignto"><label for="alignto">Align Layers to:</label><span class="pick"><select id="alignto"><option>Composition</option></select></span></div>
            <div class="aligns">
              <button aria-label="Align left"><svg><use href="#al"/></svg></button><button aria-label="Align center"><svg><use href="#ac"/></svg></button><button aria-label="Align right"><svg><use href="#ar"/></svg></button><button aria-label="Align top"><svg><use href="#at"/></svg></button><button aria-label="Align middle"><svg><use href="#am"/></svg></button><button aria-label="Align bottom"><svg><use href="#ab"/></svg></button>
            </div>
            <p class="dist">Distribute Layers:</p>
          </section>
          <section class="closed"><h2>Audio</h2></section>
          <section class="closed"><h2>Brushes</h2></section>
          <section class="paint">
            <h2>Paint <svg class="menu"><use href="#menu"/></svg></h2>
            <div class="mix">
              <div class="amounts"><p><span>Opacity:</span>0 %</p><p><span>Flow:</span>0 %</p></div>
              <div class="tip"><b></b>95</div>
              <div class="swatches"><b class="back"></b><b class="fore"></b><svg class="swap"><use href="#swap"/></svg><svg class="mini"><use href="#mini"/></svg></div>
            </div>
            <div class="field"><label for="mode">Mode:</label><span class="pick flat"><select id="mode" disabled><option>Normal</option></select></span><svg><use href="#dropper"/></svg></div>
            <div class="field"><label for="chan">Channels:</label><span class="pick flat"><select id="chan" disabled><option>RGBA</option></select></span></div>
            <div class="field"><label for="dur">Duration:</label><span class="pick flat"><select id="dur" disabled><option>Constant</option></select></span><span class="unit">1&nbsp; f</span></div>
            <div class="field"><label for="erase">Erase:</label><span class="pick flat long"><select id="erase" disabled><option>Layer Source &amp; Paint</option></select></span></div>
            <p class="clone">Clone Options</p>
            <div class="presets"><span>Preset:</span><button class="off" aria-label="Preset 1"><svg><use href="#preset"/></svg></button><button aria-label="Preset 2"><svg><use href="#preset"/></svg></button><button aria-label="Preset 3"><svg><use href="#preset"/></svg></button><button aria-label="Preset 4"><svg><use href="#preset"/></svg></button><button aria-label="Preset 5"><svg><use href="#preset"/></svg></button></div>
            <div class="field source"><label for="src">Source:</label><span class="pick flat long"><select id="src" disabled><option>Current Layer</option></select></span></div>
            <div class="checks"><label><input type="checkbox" checked>Aligned</label><label><input type="checkbox">Lock Source Time</label></div>
            <div class="shift"><span>Offset:</span><span>0 ,</span><span>0</span><svg><use href="#reset"/></svg></div>
            <div class="shift second"><span>Source Time Shift:</span><span>0&nbsp; f</span></div>
            <div class="checks overlay"><label><input type="checkbox">Clone Source Overlay:</label><span>50 %</span><svg><use href="#overlay"/></svg></div>
          </section>
          <section class="info">
            <h2>Info <svg class="menu"><use href="#menu"/></svg></h2>
            <div class="readout"><b></b><div><p>R :</p><p>G :</p><p>B :</p><p>A :&nbsp; 0</p></div><span class="plus">+</span><div><p>X : &nbsp;218</p><p>Y : &nbsp;1078</p></div></div>
          </section>
        </div>
        <span class="dockbar"></span>
      </div>
    </aside>
  </main>
</div>
<script src="app.js"></script>
</body>
</html>
```
FILE: styles.css
```css
* { box-sizing: border-box; }
html { height: 100%; background: #fff; }
body {
  margin: 0; min-height: 100vh; padding: 25px 31px 37px; display: flex;
  font: 14px/20px "Noto Sans", "Open Sans", sans-serif; color: #bababa;
}
h1, h2, p { margin: 0; font-weight: 400; }
a { color: inherit; text-decoration: none; }
em, i { font-style: normal; }
s, u { text-decoration: none; }
button { all: unset; box-sizing: border-box; display: inline-flex; align-items: center; justify-content: center; }
svg { width: 24px; height: 24px; flex: none; display: block; overflow: visible; }
.sprite { position: absolute; width: 0; height: 0; }
svg.menu { width: 12px; height: 11px; }
input[type="checkbox"] { appearance: none; margin: 0; width: 16px; height: 16px; border: 2px solid #a8a8a8; border-radius: 3px; background: #111; flex: none; }

.window {
  flex: 1; min-width: 0; height: calc(100vh - 62px); display: flex; flex-direction: column; overflow: hidden;
  background: #000; border: 1px solid #3a3a3a; border-top-color: #5c5c5c; border-bottom: 2px solid #2d2d2d;
  border-radius: 16px; box-shadow: 0 10px 30px rgba(0, 0, 0, .38);
}
.titlebar { height: 26px; flex: none; display: flex; align-items: center; background: #333; border-bottom: 1px solid #0c0c0c; padding: 0 66px 0 6px; gap: 8px; }
.titlebar h1 { flex: 1; text-align: center; font: 15px/20px Inter, sans-serif; color: #b2b2b2; }
.light { width: 12px; height: 12px; border-radius: 50%; }
.yellow { background: #f4bf4f; } .green { background: #61c554; }
.red { border: 4px solid #ec6a5e; background: #7c1810; }

.toolbar { height: 57px; flex: none; display: flex; background: #232323; border-bottom: 3px solid #000; padding-left: 6px; }
.grip { width: 4px; height: 26px; margin: 13px 5px 0 0; background: repeating-linear-gradient(#4c4c4c 0 1px, #232323 1px 3px); }
.tools { display: flex; align-items: center; padding-right: 35px; border-right: 2px solid #0e0e0e; }
.tools button { position: relative; width: 34px; height: 33px; color: #b9b9b9; border-radius: 6px; }
.tools svg { width: 22px; height: 22px; }
.tools i { width: 1px; height: 30px; margin: 0 4px; background: #101010; }
.tools .on { background: #4a4a4a; color: #d4d4d4; }
.tools .on.blue { background: #2f6ee0; color: #fff; }
.tools .dim { color: #6c6c6c; }
.tools .more::after { content: ""; position: absolute; right: 0; bottom: 2px; border: 3px solid transparent; border-right-color: currentColor; border-bottom-color: currentColor; }
.axis { flex: 1; padding-left: 26px; gap: 1px; }
.axis svg { width: 20px; height: 20px; }
.axis i { margin: 0 8px; }
.axis .snapping { display: flex; align-items: center; gap: 12px; margin-right: 20px; }
.spaces { display: flex; align-items: center; width: 771px; padding-left: 31px; }
.spaces a { height: 34px; line-height: 34px; margin: 2px 60px 0 0; }
.spaces .current { color: #ececec; border-bottom: 3px solid #e4e4e4; display: flex; align-items: center; gap: 18px; padding: 0 5px 0 1px; margin-right: 28px; }
.spaces .overflow { display: flex; align-items: center; margin: 0 0 0 -2px; }
.overflow svg { width: 16px; height: 13px; }

.workspace { flex: 1; min-height: 0; display: flex; gap: 6px; }
.left { flex: 1; min-width: 0; display: flex; flex-direction: column; gap: 6px; }
.upper { flex: 1; min-height: 0; display: flex; gap: 5px; }
.panel { background: #232323; display: flex; flex-direction: column; min-width: 0; }
.tabs { display: flex; height: 40px; flex: none; padding-top: 1px; }
.tab { display: flex; align-items: center; height: 31px; white-space: nowrap; }
.tab.current { color: #ececec; border-bottom: 2px solid #d8d8d8; }
.sw { width: 14px; height: 14px; margin-bottom: 4px; flex: none; }
.lav { background: #a9a7ca; } .tan { background: #a59679; }
.tab em { color: #b4b4b4; }

.search { display: flex; align-items: center; height: 26px; background: #111; border: 1px solid #343434; border-radius: 6px; padding-left: 8px; }
.search svg { width: 22px; height: 16px; }
.search input { all: unset; flex: 1; min-width: 0; height: 20px; }

.project { width: 436px; flex: none; }
.project .tab.current { margin-left: 16px; gap: 15px; padding-left: 1px; }
.project .effects { margin-left: 49px; gap: 14px; }
.summary { display: flex; gap: 7px; padding-left: 9px; height: 144px; }
.thumb { width: 155px; height: 89px; background: #000; padding: 36px 0 0 44px; font: bold 5px/8px "DejaVu Sans Mono", monospace; color: #aaa; white-space: nowrap; }
.meta { white-space: nowrap; margin-top: -2px; line-height: 18px; }
.meta small { font-size: 13px; margin-left: 1px; }
.project .search { margin: 0 8px 9px 9px; flex: none; }
.items { table-layout: fixed; width: 100%; border-collapse: collapse; border-top: 1px solid #111; }
.items th { font-weight: 400; text-align: left; height: 26px; padding: 0; border-bottom: 1px solid #111; font-size: 12px; white-space: nowrap; }
.items th:nth-child(1) { width: 22px; } .items th:nth-child(2) { width: 138px; } .items th:nth-child(3) { width: 29px; } .items th:nth-child(4) { width: 105px; } .items th:nth-child(5) { width: 66px; }
.items th.bar { background: linear-gradient(#121212, #121212) 0 6px / 4px 15px no-repeat; padding-left: 8px; }
.sort { float: right; margin: 7px 5px 0 0; border: 8px solid transparent; border-top: 7px solid #aaa; border-bottom: 0; }
.items .tagcell svg { width: 18px; height: 18px; }
.items td { height: 26px; padding: 0 0 0 9px; background: linear-gradient(#151515, #151515) 0 100% / 100% 1px no-repeat; white-space: nowrap; }
.items td:first-child { padding-left: 3px; }
.items td.rate { background-size: 52px 1px; }
.items td .sw { display: block; margin: 0; box-shadow: 0 0 0 1px #151515; }
.items td svg { width: 22px; height: 18px; }
.items td svg.twirl { width: 10px; height: 14px; }
.items .nm { padding: 0 0 0 2px; }
.items .nm div { display: flex; align-items: center; height: 25px; }
.items .nm span { flex: 1; padding-left: 2px; margin-left: 2px; line-height: 25px; height: 25px; margin-right: 1px; }
.items .rate div { display: flex; justify-content: space-between; padding-right: 4px; align-items: center; }
.items .rate svg { width: 18px; height: 18px; }
.items .sel td { background: #4a4a4a; border-bottom: 1px solid #151515; }
.items .sel td.rate { background: linear-gradient(90deg, #4a4a4a 52px, #232323 52px); border-bottom: 0; }
.items .sel .nm span { background: #b0b0b0; color: #1b1b1b; }
.ai { width: 18px; height: 20px; margin: 0 2px; background: #330000; border-radius: 3px; color: #ff9a00; font: bold 11px/16px "Noto Sans", sans-serif; text-align: center; border-top: 1px solid #7a3b00; }
.project-foot { margin-top: auto; height: 33px; border-top: 1px solid #0e0e0e; display: flex; align-items: center; gap: 10px; padding-left: 4px; }
.project-foot svg { width: 22px; height: 20px; }
.bpc { width: 68px; height: 25px; border: 1px solid #363636; border-radius: 6px; background: #151515; }
.pill { width: 45px; height: 13px; border-radius: 7px; background: #4a4a4a; margin-left: 3px; }

.viewer-panel { flex: 1; }
.viewer-panel .tab.open { margin-left: 15px; color: #dedede; }
.viewer-panel .tab .sw { margin-left: 12px; }
.tab .lock { width: 16px; height: 17px; margin: 0 10px 4px 13px; }
.viewer-panel .menu { margin-left: 19px; }
.crumbs { display: flex; align-items: center; padding: 4px 0 6px 26px; flex: none; border-bottom: 2px solid #181818; }
.crumbs button { width: 94px; height: 33px; background: #4a4a4a; color: #dadada; border-radius: 6px; gap: 18px; margin-right: 13px; padding-left: 5px; }
.crumbs svg { width: 8px; height: 12px; }
.viewer { flex: 1; min-height: 0; background: #1d1d1d; padding: 7px 82px 7px 80px; display: flex; border-bottom: 1px solid #121212; }
.frame { flex: 1; position: relative; background: #000; }
.card { position: absolute; left: 27.5%; top: 23%; width: 45.5%; height: 56.4%; background: #c4c4c4; border: solid #8d8d8d; border-width: 0 6px; box-shadow: 0 6px 0 #262626; padding: 144px 0 0 21px; font: bold 47px/70px "DejaVu Sans Mono", monospace; color: #fff; white-space: pre; text-shadow: 1px 0 #fff, -1px 0 #fff, 2px 0 #fff; }
.center { position: absolute; left: 50%; top: 50%; width: 26px; height: 30px; margin: -12px 0 0 -11px; }
.gizmo { position: absolute; left: -11px; bottom: 54px; width: 90px; height: 90px; }
.ax { position: absolute; font-size: 15px; }
.ax.y { left: -13px; bottom: 138px; color: #0fa80f; } .ax.z { left: 11px; bottom: 76px; color: #3347e0; } .ax.x { left: 73px; bottom: 52px; color: #d22; }
.h { position: absolute; width: 10px; height: 10px; background: #a9a7ca; }
.h.tl, .h.tc, .h.tr { top: -4px; } .h.bl, .h.bc, .h.br { bottom: -6px; } .h.ml, .h.mr { top: calc(50% - 5px); }
.h.tl, .h.ml, .h.bl { left: -4px; } .h.tc, .h.bc { left: calc(50% - 5px); } .h.tr, .h.mr, .h.br { right: -6px; }
.camera-name { position: absolute; left: -65px; top: 7px; color: #c9c9c9; font-size: 15px; text-shadow: 1px 1px 1px #000; }
.bound { position: absolute; top: 0; bottom: 0; right: -10px; border-left: 1px dotted #5a2222; }
.viewer-foot { height: 35px; flex: none; display: flex; align-items: center; padding: 1px 0 0 41px; }
.viewer-foot i { width: 2px; height: 22px; margin: 0 12px; background: #111; }
.viewer-foot a, .lt a, .prop a { color: #5796f2; }
.zoomv { width: 67px; }
.zoomv, .color a { font-size: 15px; }
.zoomv a { margin-right: 4px; }
.pick { display: inline-grid; align-items: center; background: #000; border: 1px solid #343434; border-radius: 6px; height: 26px; }
.pick select { all: unset; grid-area: 1 / 1; padding-left: 10px; line-height: 22px; white-space: nowrap; }
.pick::after { content: ""; grid-area: 1 / 1; justify-self: end; width: 10px; height: 10px; margin: 0 13px 6px 0; border: solid #b9b9b9; border-width: 0 3px 3px 0; transform: rotate(45deg); pointer-events: none; }
.zoomsel { width: 26px; } .zoomsel::after { margin-right: 7px; }
.half { width: 122px; } .classic { width: 124px; } .cam { width: 146px; } .views { width: 120px; }
.grp { display: flex; align-items: center; gap: 5px; }
.grp button { width: 28px; height: 27px; border-radius: 6px; }
.grp svg { width: 20px; height: 20px; }
.grp .on { background: #4a4a4a; color: #d0d0d0; }
.grp .dim { color: #7c7c7c; } .grp .off { background: #373737; color: #7c7c7c; }
.color { gap: 4px; }
.color a { width: 41px; }
.box { height: 26px; border: 1px solid #363636; border-radius: 6px; background: #151515; }
.time { width: 95px; } .draft { width: 118px; gap: 9px; } .draft svg { width: 20px; height: 20px; }
.viewer-foot .far { margin-right: auto; }
.viewer-foot .views { margin-right: 13px; }

.timeline { flex: none; background: #232323; border: 1px solid #4a8ae8; display: flex; flex-direction: column; }
.tl-tabs { display: flex; height: 32px; padding-left: 16px; gap: 74px; }
.tl-tabs .tab.current { padding-right: 5px; margin-right: -30px; }
.tl-tabs .tab em { margin-right: -4px; }
.tl-tabs .tab { gap: 15px; }
.tl-body { display: grid; grid-template-columns: 731px 1fr 24px; height: 365px; }
.layers { display: flex; flex-direction: column; min-height: 0; border-right: 2px solid #0d0d0d; }
.tl-ctrl { height: 48px; flex: none; display: flex; padding-left: 15px; border-bottom: 1px solid #111; }
.clock { width: 120px; display: flex; flex-direction: column; color: #2e5ca8; white-space: nowrap; line-height: 18px; }
.clock strong { color: #4f93f7; font-size: 17px; line-height: 24px; padding: 4px 0 0 2px; height: 27px; }
.clock span { font-size: 13px; }
.tl-ctrl .search { width: 407px; margin-top: 10px; }
.toggles { display: flex; margin: 11px 0 0 11px; }
.toggles button { width: 33px; height: 24px; }
.toggles svg { width: 20px; height: 20px; }
.row { display: grid; grid-template-columns: 21px 21px 20px 21px 28px 19px 44px 28px 150px 6px 164px 25px 24px 4px 122px 1fr; align-items: center; height: 23px; padding-left: 5px; background: #333; border-bottom: 1px solid #191919; white-space: nowrap; }
.row > span { display: flex; align-items: center; justify-content: center; }
.row svg { width: 17px; height: 17px; }
.row .c { width: 17px; height: 17px; background: #161616; border-radius: 3px; display: flex; align-items: center; justify-content: center; justify-self: center; }
.row .twirl { width: 9px; height: 13px; margin-left: 11px; }
.row .sw { width: 17px; height: 17px; margin: 0; }
.row .num { justify-content: flex-start; padding-left: 10px; }
.row .name { align-self: stretch; justify-content: flex-start; padding-left: 3px; }
.row .ic svg { width: 22px; height: 18px; }
.solid { width: 18px; height: 19px; background: #fff; border: 1px solid #000; }
.row > .switches { display: grid; grid-template-columns: repeat(8, 1fr); justify-items: center; grid-column: 11; }
.fx { font: italic 17px/16px "Liberation Serif", serif; color: #c6c6c6; }
.fx.upright { font-style: normal; }
.row .spiral { grid-column: 13; color: #959595; }
.row > .pick { grid-column: 15; height: 20px; border-color: #111; border-radius: 4px; display: grid; justify-content: stretch; }
.row .pick select { line-height: 18px; }
.row .pick::after { width: 9px; height: 9px; }
.row.sel { background: #4a4a4a; }
.row.sel .name { background: #b0b0b0; color: #1b1b1b; }
.row .dimsun { color: #6c6c6c; background: #222; }
.row.head { height: 26px; flex: none; background: #232323; font-size: 12px; border-bottom: 1px solid #0c0c0c; }
.head .dot::after { content: ""; width: 10px; height: 10px; border-radius: 50%; background: #aaa; }
.head .bar { background: linear-gradient(#121212, #121212) 0 50% / 3px 16px no-repeat; }
.head > .bar:nth-child(5) { align-self: stretch; margin-left: 3px; }
.head .tagh { margin-left: -7px; }
.head .num { padding-left: 8px; }
.head .lname { grid-column: 8 / 10; justify-content: flex-start; padding-left: 9px; align-self: stretch; }
.head > .switches { align-self: stretch; margin-left: -6px; padding-left: 6px; align-items: center; }
.head .plink { grid-column: 12 / 16; justify-content: flex-start; margin-left: 20px; padding-left: 9px; align-self: stretch; }
.head .endbar { align-self: stretch; margin-left: 4px; }
.rows { flex: 1; min-height: 0; overflow: hidden; }

.tracks { position: relative; display: grid; grid-template-rows: 8px 13px 27px 21px 5px 1fr; min-height: 0; }
.nav { grid-row: 2; background: #686868; border: solid #4396f5; border-width: 0 9px; border-radius: 7px; }
.ruler { grid-row: 3; position: relative; background: #1f1f1f; z-index: 1; }
.tick { position: absolute; top: 2px; width: 40px; margin-left: -20px; text-align: center; font-size: 13px; line-height: 17px; color: #b4b4b4; }
.tick::after { content: ""; display: block; width: 1px; height: 7px; margin: 1px auto 0; background: #aaa; }
.tick.long::after { height: 15px; }
.work { grid-row: 4; background: #1f1f1f; border-top: 1px solid #101010; border-bottom: 1px solid #050505; }
.work span { display: block; height: 19px; width: calc((100% - 20px) * .533 + 10px); margin-left: 3px; background: #5e5e5e; border: solid #4396f5; border-width: 0 6px; border-radius: 6px; }
.cache { grid-row: 5; position: relative; margin: 0 10px; }
.cache b { position: absolute; top: 1px; height: 4px; background: #10c020; }
.lanes { grid-row: 6; min-height: 0; overflow: hidden; }
.lane { height: 23px; background: #333; border-bottom: 1px solid #191919; padding: 0 10px; }
.lane.sel { background: #4a4a4a; }
.lane div { position: relative; height: 22px; }
.lane b { position: absolute; top: 0; height: 22px; }
.playhead { position: absolute; left: 2px; top: 27px; bottom: 0; width: 16px; z-index: 2; }
.playhead svg { width: 16px; height: 18px; }
.playhead::after { content: ""; position: absolute; left: 7px; top: 18px; bottom: 0; width: 2px; background: #5796f2; }
.gutter { display: flex; flex-direction: column; align-items: center; padding-top: 50px; min-height: 0; }
.mk { width: 15px; height: 19px; margin-bottom: 6px; } .cm { width: 20px; height: 20px; }
.thumbbar { width: 12px; height: 250px; border-radius: 6px; background: #4d4d4d; margin-top: 7px; }
.tl-foot { height: 23px; display: flex; align-items: center; padding-left: 7px; background: #232323; border-top: 1px solid #111; }
.tl-foot button { width: 26px; height: 20px; border-radius: 5px; }
.tl-foot button.on { background: #4a4a4a; width: 20px; margin-right: 3px; }
.tl-foot svg { width: 16px; height: 17px; }
.frt { margin-left: 33px; width: 230px; } .frt strong { color: #7fd9ac; margin-left: 8px; }
.tl-foot .modes { width: auto; }
.zoomer { display: flex; align-items: center; margin-left: 204px; gap: 10px; }
.tl-foot .m1 { width: 14px; height: 6px; } .tl-foot .m2 { width: 20px; height: 9px; }
.zoomer input { appearance: none; width: 80px; height: 14px; margin: 0; background: linear-gradient(#585858, #585858) 0 6px / 100% 2px no-repeat; }
.zoomer input::-webkit-slider-thumb { appearance: none; width: 14px; height: 14px; border: 3px solid #b9b9b9; border-radius: 50%; background: #232323; }

.right { width: 430px; flex: none; display: flex; flex-direction: column; gap: 6px; min-height: 0; }
.right h2 { display: flex; align-items: center; height: 36px; padding-left: 16px; font-size: 14px; color: #dedede; }
.right .stack h2 .menu { margin-left: auto; margin-right: 12px; }
.preview { background: #232323; height: 179px; overflow: hidden; flex: none; }
.preview h2 { height: 34px; gap: 15px; }
.transport { display: flex; width: 265px; margin-left: 8px; height: 39px; padding: 0 0 5px 47px; border-bottom: 1px solid #141414; }
.transport button { width: 33px; } .transport svg { width: 17px; height: 13px; }
.cap { display: block; padding: 9px 0 0 7px; height: 31px; }
.short { display: flex; align-items: center; gap: 10px; padding-left: 8px; }
.short .pick { width: 229px; } .short svg, .include svg { width: 20px; height: 20px; }
.include { display: flex; align-items: center; height: 38px; padding: 0 0 5px 7px; gap: 4px; margin-top: 3px; }
.include span { width: 126px; padding-top: 5px; } .include button { width: 29px; height: 27px; border-radius: 6px; } .include .on { background: #4a4a4a; color: #dcdcdc; }
.include .exp { margin-left: 7px; }
.cached { display: flex; align-items: flex-start; gap: 14px; padding-left: 8px; line-height: 16px; margin-top: 2px; }
.dock { flex: 1; min-height: 0; display: flex; background: #232323; }
.stack { width: 406px; }
.stack section { border-bottom: 1px solid #000; }
.stack .fxp { border-bottom-width: 2px; }
.stack .fxp h2 { height: 35px; }
.fxp .search { margin: 0 6px 5px 7px; }
.empty { height: 37px; border-top: 2px solid #080808; border-right: 1px solid #080808; display: flex; align-items: center; justify-content: flex-end; padding-right: 10px; }
.empty svg { width: 18px; height: 18px; }
.dockbar { width: 11px; margin: 5px 0 55px 7px; background: #4a4a4a; border-radius: 5px; }
.lt { display: grid; grid-template-columns: 191px 1fr; padding-left: 15px; height: 25px; align-items: center; }
.prop { display: grid; grid-template-columns: 44px 88px 28px 54px 54px; column-gap: 5px; align-items: center; height: 27px; padding-left: 31px; }
.prop > svg { width: 18px; height: 18px; } .prop .chain { width: 18px; height: 12px; justify-self: end; margin-right: 9px; color: #5796f2; }
.prop a { border-bottom: 1px solid #777; padding-left: 2px; height: 23px; line-height: 22px; }
.prop a + a { margin: 0 -9px 0 9px; }
.prop a.wide { width: 73px; }
.prop s { color: #b6b6b6; margin: 0 1px; }
.props { padding-bottom: 22px; }
.alignto { display: flex; align-items: center; gap: 11px; height: 50px; padding-left: 8px; }
.alignto .pick { width: 143px; height: 31px; }
.aligns { display: flex; gap: 24px; margin-left: 8px; height: 47px; width: 265px; padding: 7px 0 0 6px; border-bottom: 1px solid #141414; align-items: flex-start; }
.aligns button { width: 22px; } .aligns svg { width: 22px; height: 22px; }
.dist { height: 36px; padding: 13px 0 0 8px; }
.stack .closed { border-bottom: 3px solid #000; } .stack .closed h2 { height: 32px; color: #bababa; padding-top: 2px; }
.paint { color: #6e6e6e; padding-bottom: 4px; }
.mix { display: flex; height: 68px; padding-top: 12px; }
.amounts p { display: flex; gap: 7px; height: 23px; } .amounts span { width: 77px; text-align: right; }
.amounts { width: 156px; }
.tip { width: 16px; text-align: center; font-size: 12px; line-height: 16px; padding-top: 3px; } .tip b { display: block; width: 15px; height: 15px; border-radius: 50%; background: #454545; margin-bottom: 3px; }
.swatches { position: relative; width: 60px; margin: -2px 0 0 42px; }
.swatches b { position: absolute; border: 1px solid #000; width: 36px; height: 35px; } .fore { left: 0; top: 0; background: #ea3829; box-shadow: inset 0 0 0 2px #fff; } .back { left: 18px; top: 18px; background: #fff; }
.swatches .swap { position: absolute; left: 40px; top: 0; width: 15px; height: 15px; color: #484848; } .swatches .mini { position: absolute; left: -2px; top: 39px; width: 14px; height: 14px; color: #484848; }
.field { display: flex; align-items: center; height: 31px; padding-bottom: 5px; gap: 4px; } .field label { width: 77px; text-align: right; }
.flat { width: 157px; background: #333; border-color: #333; } .flat.long { width: 192px; } .flat::after { border-color: #757575; }
.flat select { padding-left: 11px; }
.field svg { width: 22px; height: 22px; }
.clone { display: flex; align-items: center; padding-left: 19px; height: 25px; gap: 4px; } .clone::after { content: ""; width: 136px; height: 1px; background: #141414; }
.presets { display: flex; align-items: center; height: 45px; padding: 0 0 4px 29px; gap: 2px; } .presets span { width: 50px; } .presets button { width: 34px; height: 30px; border-radius: 6px; } .presets svg { width: 24px; height: 22px; } .presets .off { background: #333; }
.source { height: 30px; } .source label { width: 71px; margin-right: 6px; }
.checks { display: flex; align-items: center; height: 30px; padding-left: 20px; gap: 17px; } .checks label { display: flex; align-items: center; gap: 13px; }
.checks input { border-color: #757575; } .checks input:checked { background: #757575; display: grid; place-items: center; } .checks input:checked::after { content: ""; width: 5px; height: 9px; border: solid #111; border-width: 0 2px 2px 0; transform: rotate(45deg); margin-bottom: 3px; }
.shift { display: grid; grid-template-columns: 139px 57px 46px 22px; column-gap: 5px; height: 27px; align-items: center; } .shift span:first-child { text-align: right; } .shift svg { width: 20px; height: 20px; }
.shift.second { grid-template-columns: 129px 62px; width: 263px; margin-left: 10px; height: 30px; border-bottom: 1px solid #141414; }
.overlay { height: 40px; gap: 8px; } .overlay svg { width: 20px; height: 20px; margin-left: 14px; }
.stack .info { border-bottom: 0; }
.readout { display: flex; color: #c0c0c0; margin: 0 11px 0 8px; height: 86px; padding: 5px 0 0 2px; line-height: 18px; border-bottom: 1px solid #141414; }
.readout b { width: 28px; height: 28px; background: #000; margin: 16px 6px 0 0; } .readout div:nth-child(2) { width: 106px; }
.plus { font-size: 22px; padding-top: 27px; width: 18px; }
```
FILE: app.js
```js
const icon = (id, cls = '') => `<svg class="${cls}"><use href="#${id}"/></svg>`;

const LABEL = { lav: '#a9a7ca', tan: '#a59679', red: '#a8443f', aqua: '#aac9c4', yellow: '#dfd35c', blue: '#6b7cd8' };

const items = [
  ['comp', 'White', 'tan', 'Composition', '', '24'],
  ['file', 'Unemplo...mp4', 'aqua', 'Importe...MEX', '11.4 MB', '30'],
  ['ai', 'TaikoBl...go.ai', 'lav', 'Vector Art', '676 KB', ''],
  ['folder', 'Solids', 'yellow', 'Folder', '', ''],
  ['comp', 'Resume', 'tan', 'Composition', '', '24'],
  ['comp', 'Opening', 'tan', 'Composition', '', '24'],
  ['comp', 'Hat', 'tan', 'Composition', '', '24'],
  ['comp', 'EyeOpening', 'tan', 'Composition', '', '24'],
  ['file', 'Dombrow....mp4', 'aqua', 'Importe...MEX', '4.0 MB', '29.97'],
  ['comp', 'Comp 1', 'tan', 'Composition', '', '24'],
  ['file', 'Blink', 'aqua', 'QuickTime', '182 KB', '24'],
];
document.getElementById('items').innerHTML = items.map(([ic, name, label, type, size, rate], i) => `
  <tr class="${name === 'Opening' ? 'sel' : ''}">
    <td>${ic === 'folder' ? icon('twirl', 'twirl') : ''}</td>
    <td class="nm"><div>${ic === 'ai' ? '<b class="ai">Ai</b>' : icon(ic)}<span>${name}</span></div></td>
    <td><b class="sw" style="background:${LABEL[label]}"></b></td>
    <td>${type}</td><td>${size}</td>
    <td class="rate"><div>${rate}${i === 0 ? icon('flow') : ''}</div></td>
  </tr>`).join('');

// name, icon, label, flags, bars as [start, end, colour] in seconds
const layers = [
  ['Greyscale', 'white', 'lav', 'fx adj', [[0, 14.93, 'linear-gradient(#aeaccc, #9794b8 50%, #817fa6)']]],
  ['Pixel', 'white', 'lav', 'fx adj', [[0, 15.6, '#6f6e7e']]],
  ['[EyeOpening]', 'comp', 'red', '', [[0, 30.25, '#4b3636'], [15.84, 17.35, '#723c3a']]],
  ['[EyeOpening]', 'comp', 'red', 'fx', [[0, 30.25, '#4b3636'], [15.84, 17.35, '#723c3a']]],
  ['[Opening]', 'comp', 'tan', '', [[0, 30.25, '#3c3b38'], [0, 15.84, '#6c6454']]],
  ['&lt;empty text layer&gt;', 'T', 'red', 'sun', [[0, 30, '#743b39']]],
  ['[Resume]', 'comp', 'tan', 'fx cube', [[0, 30.25, '#4a4740'], [7.3, 13.45, '#6c6454']]],
  ['[White]', 'comp', 'tan', 'hidden', [[0, 13.45, '#6c6454']]],
  ['[Hat]', 'comp', 'tan', 'audio', [[2.63, 30, '#6c6454']]],
  ['Star', 'star', 'blue', 'sun', [[0, 7.27, '#4d5587']]],
  ['[Medium...lue Solid 1]', 'solid', 'red', 'fx', [[15.05, 15.84, '#723c3a']]],
  ['[Medium...lue Solid 1]', 'solid', 'red', '', [[0, 30, '#743b39']]],
  ['[Unemployed.mp4]', 'file', 'aqua', 'audio', [[0, 30.25, '#6a7b78']]],
];
const layerIcon = { white: '<b class="solid"></b>', solid: '<b class="solid" style="background:#a5c8e6"></b>', comp: icon('comp'), T: '<em class="fx upright">T</em>', star: icon('star'), file: icon('file') };
const cell = (inner = '', cls = '') => `<span class="c ${cls}">${inner}</span>`;
document.getElementById('layers').innerHTML = layers.map(([name, ic, label, flags, bars], i) => {
  const has = f => flags.includes(f);
  return `<div class="row ${i === 0 ? 'sel' : ''}">
    ${cell(has('hidden') ? '' : icon('eye'))}
    ${has('audio') ? cell(icon('audio')) : '<span></span>'}
    ${has('hidden') ? '<span></span>' : cell()}${cell()}
    ${icon('twirl', 'twirl')}<b class="sw" style="background:${LABEL[label]}"></b>
    <span class="num">${i + 1}</span><span class="ic">${layerIcon[ic]}</span><span class="name">${name}</span>
    <span class="switches">${cell(icon('shy'))}${has('sun') ? cell(icon('sun'), 'dimsun') : cell()}${cell(icon('slash'))}${has('fx') ? cell('<em class="fx">fx</em>') : '<span></span>'}${ic === 'file' ? cell() : '<span></span>'}${cell()}${cell(has('adj') ? icon('adj') : '')}${cell(has('cube') ? icon('cube') : '')}</span>
    <span class="spiral">${icon('spiral')}</span>
    <span class="pick"><select aria-label="Parent of layer ${i + 1}"><option>None</option></select></span>
  </div>`;
}).join('');

const pct = t => (t / 30 * 100).toFixed(2) + '%';
document.getElementById('lanes').innerHTML = layers.map((l, i) =>
  `<div class="lane ${i === 0 ? 'sel' : ''}"><div>${l[4].map(([a, b, c]) => `<b style="left:${pct(a)};width:${pct(b - a)};background:${c}"></b>`).join('')}</div></div>`).join('');

let ticks = '';
for (let t = 0; t <= 30; t += 2) {
  const text = t === 0 ? '0:00s' : String(t).padStart(2, '0') + 's';
  ticks += `<span class="tick ${t > 14 ? 'long' : ''}" style="left:calc(10px + (100% - 20px) * ${(t / 30).toFixed(4)})">${text}</span>`;
}
document.getElementById('ruler').innerHTML = ticks;

document.getElementById('cache').innerHTML = [[.08, .04], [.25, .05], [.35, .07], [.5, .12], [.67, .03], [.75, .2], [1.1, .04], [1.15, .15], [1.33, .04], [1.62, .05], [2.32, .04], [2.82, .04], [3.08, .04], [3.18, .1]]
  .map(([s, w]) => `<b style="left:${pct(s)};width:${pct(w)}"></b>`).join('');
```
